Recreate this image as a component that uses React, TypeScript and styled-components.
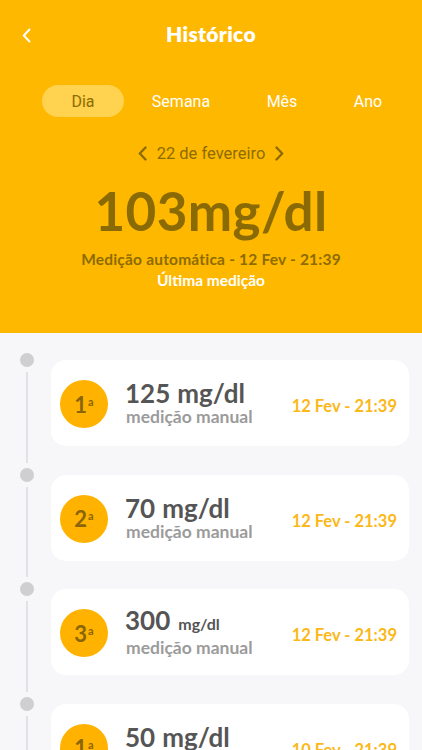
import React from "react";
import styled, { createGlobalStyle } from "styled-components";

const Global = createGlobalStyle`
  html, body { margin: 0; padding: 0; background: #F7F7FA; }
  body { font-family: "Lato", "Noto Sans", sans-serif; }
  * { box-sizing: border-box; }
`;

const Page = styled.div`
  width: 422px;
  height: 750px;
  overflow: hidden;
  background: #f7f7fa;
`;

const Header = styled.header`
  background: #ffb800;
  height: 333px;
  padding-top: 18px;
  display: flex;
  flex-direction: column;
  align-items: stretch;
`;

const TopBar = styled.div`
  position: relative;
  height: 30px;
  display: flex;
  align-items: center;
  justify-content: center;
`;

const BackButton = styled.button`
  position: absolute;
  left: 16px;
  top: 7px;
  width: 20px;
  height: 20px;
  padding: 0;
  border: 0;
  background: transparent;
  display: flex;
  align-items: center;
  justify-content: center;
`;

const Title = styled.h1`
  margin: 0;
  font-size: 21px;
  font-weight: 800;
  color: #ffffff;
  letter-spacing: 0.3px;
`;

const Tabs = styled.nav`
  margin-top: 37px;
  display: grid;
  grid-template-columns: 82px 114px 88px 84px;
  padding-left: 42px;
`;

const Tab = styled.div<{ $active?: boolean }>`
  height: 32px;
  border-radius: 16px;
  display: flex;
  align-items: center;
  justify-content: center;
  font-family: "Roboto", "Lato", sans-serif;
  font-size: 16px;
  padding-top: 1px;
  color: ${(p) => (p.$active ? "#8c6c00" : "#ffffff")};
  background: ${(p) => (p.$active ? "#ffd24f" : "transparent")};
`;

const DateNav = styled.div`
  margin-top: 26px;
  height: 20px;
  display: flex;
  align-items: center;
  justify-content: center;
  gap: 10px;
  font-family: "Roboto", "Lato", sans-serif;
  font-size: 16.5px;
  color: #8c6c00;
`;

const BigValue = styled.div`
  margin-top: 20px;
  text-align: center;
  font-size: 53px;
  line-height: 56px;
  font-weight: 700;
  color: #8a6a05;
  letter-spacing: 0.4px;
`;

const Subtitle = styled.div<{ $light?: boolean }>`
  text-align: center;
  font-size: 15.5px;
  line-height: 20px;
  font-weight: 700;
  color: ${(p) => (p.$light ? "#ffffff" : "#8c6c00")};
  margin-top: ${(p) => (p.$light ? "1px" : "10px")};
  letter-spacing: ${(p) => (p.$light ? "0" : "0.2px")};
`;

const List = styled.div`
  padding: 20px 13px 0 20px;
  display: flex;
  flex-direction: column;
`;

const Row = styled.div`
  display: flex;
  gap: 17px;
  height: 114.5px;
`;

const Rail = styled.div`
  width: 14px;
  display: flex;
  flex-direction: column;
  align-items: center;
  flex-shrink: 0;
`;

const Dot = styled.div`
  width: 14px;
  height: 14px;
  border-radius: 50%;
  background: #cfcfd2;
  flex-shrink: 0;
`;

const Line = styled.div`
  width: 2px;
  flex: 1;
  margin: 5px 0 5px;
  background: #e2e2e6;
`;

const Card = styled.div`
  margin-top: 7px;
  height: 86px;
  flex: 1;
  background: #ffffff;
  border-radius: 15px;
  display: flex;
  align-items: center;
  padding: 0 12px 0 9px;
`;

const Badge = styled.div`
  width: 48px;
  height: 48px;
  flex-shrink: 0;
  border-radius: 50%;
  background: #ffb300;
  display: flex;
  align-items: center;
  justify-content: center;
  color: #8a6505;
  font-size: 22px;
  font-weight: 700;
  margin-top: 2px;
`;

const Ord = styled.sup`
  font-size: 11px;
  font-weight: 700;
  margin-left: 1px;
  position: relative;
  top: -3px;
`;

const Info = styled.div`
  margin-left: 17px;
  flex: 1;
  display: flex;
  flex-direction: column;
`;

const Value = styled.div`
  font-size: 26px;
  line-height: 28px;
  font-weight: 700;
  color: #555555;
  white-space: nowrap;
`;

const Unit = styled.span<{ $small?: boolean }>`
  font-size: ${(p) => (p.$small ? "16px" : "26px")};
  margin-left: ${(p) => (p.$small ? "8px" : "7px")};
`;

const Kind = styled.div`
  font-size: 17.5px;
  line-height: 20px;
  font-weight: 700;
  color: #9b9b9b;
  padding-left: 1px;
`;

const When = styled.div`
  font-size: 16.5px;
  font-weight: 700;
  color: #fbb817;
  white-space: nowrap;
  margin-top: 6px;
`;

const Chevron = ({ dir, color, size, sw }: { dir: "l" | "r"; color: string; size: number; sw: number }) => (
  <svg width={size * 0.6} height={size} viewBox="0 0 6 10" fill="none">
    <path
      d={dir === "l" ? "M5 1 L1.2 5 L5 9" : "M1 1 L4.8 5 L1 9"}
      stroke={color}
      strokeWidth={sw}
      strokeLinecap="round"
      strokeLinejoin="round"
    />
  </svg>
);

const items = [
  { n: "1", v: "125", small: false, date: "12 Fev - 21:39" },
  { n: "2", v: "70", small: false, date: "12 Fev - 21:39" },
  { n: "3", v: "300", small: true, date: "12 Fev - 21:39" },
  { n: "1", v: "50", small: false, date: "10 Fev - 21:39" },
];

export default function App() {
  return (
    <Page>
      <Global />
      <Header>
        <TopBar>
          <BackButton aria-label="voltar">
            <Chevron dir="l" color="#ffffff" size={15} sw={1.3} />
          </BackButton>
          <Title>Histórico</Title>
        </TopBar>
        <Tabs>
          <Tab $active>Dia</Tab>
          <Tab>Semana</Tab>
          <Tab>Mês</Tab>
          <Tab>Ano</Tab>
        </Tabs>
        <DateNav>
          <Chevron dir="l" color="#8c6c00" size={15} sw={1.6} />
          <span>22 de fevereiro</span>
          <Chevron dir="r" color="#8c6c00" size={15} sw={1.6} />
        </DateNav>
        <BigValue>103mg/dl</BigValue>
        <Subtitle>Medição automática - 12 Fev - 21:39</Subtitle>
        <Subtitle $light>Última medição</Subtitle>
      </Header>
      <List>
        {items.map((it, i) => (
          <Row key={i}>
            <Rail>
              <Dot />
              <Line />
            </Rail>
            <Card>
              <Badge>
                {it.n}
                <Ord>a</Ord>
              </Badge>
              <Info>
                <Value>
                  {it.v}
                  <Unit $small={it.small}>mg/dl</Unit>
                </Value>
                <Kind>medição manual</Kind>
              </Info>
              <When>{it.date}</When>
            </Card>
          </Row>
        ))}
      </List>
    </Page>
  );
}
